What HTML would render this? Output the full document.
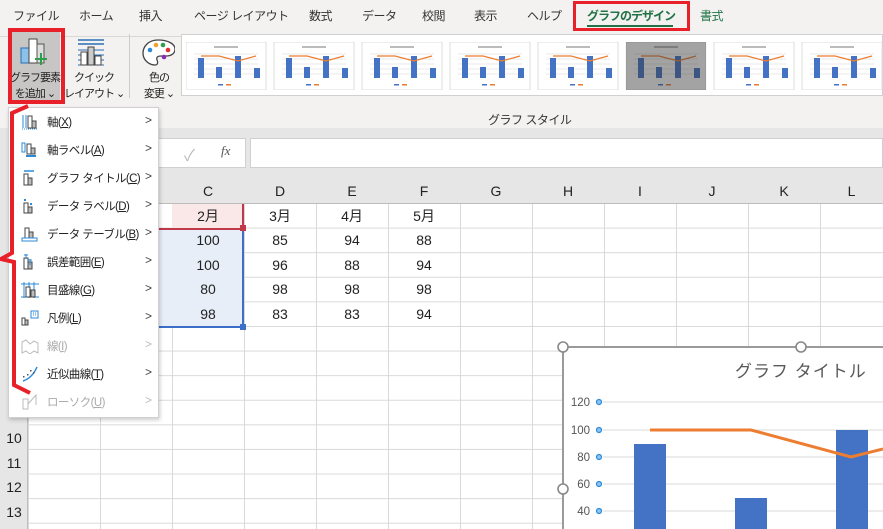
<!DOCTYPE html>
<html><head><meta charset="utf-8"><style>
*{margin:0;padding:0;box-sizing:border-box}
body{width:883px;height:529px;overflow:hidden;background:#fff;font-family:"Liberation Sans","Noto Sans CJK JP",sans-serif;position:relative;color:#222}
div,span{white-space:nowrap}
.a{position:absolute}
.tab{position:absolute;top:7px;font-size:12px;color:#333;letter-spacing:-0.5px}
.mi{position:absolute;left:0;width:150px;height:28px;font-size:11.5px;color:#222;letter-spacing:-0.6px}
.mi span.t{position:absolute;left:38px;top:6px}
.mi span.c{position:absolute;left:136px;top:5px;font-size:12px;color:#444}
.mi.dis{color:#aaa}.mi.dis span.c{color:#bbb}
.ic{position:absolute;left:12px;top:6px}
.ch{position:absolute;top:180px;height:23px;font-size:14px;text-align:center;line-height:23px;color:#222}
.cell{position:absolute;font-size:14px;text-align:center;width:72px}
.rh{position:absolute;left:0;width:28px;text-align:center;font-size:14px}
.bl{position:absolute;font-size:11px;line-height:16px;text-align:center;letter-spacing:-1px}
</style></head><body>
<div class="a" style="left:0;top:0;width:883px;height:130px;background:#f3f2f1"></div>
<div class="tab" style="left:13px">ファイル</div>
<div class="tab" style="left:79px">ホーム</div>
<div class="tab" style="left:139px">挿入</div>
<div class="tab" style="left:194px">ページ レイアウト</div>
<div class="tab" style="left:309px">数式</div>
<div class="tab" style="left:362px">データ</div>
<div class="tab" style="left:422px">校閲</div>
<div class="tab" style="left:474px">表示</div>
<div class="tab" style="left:527px">ヘルプ</div>
<div class="tab" style="left:587px;color:#217346;font-weight:bold;letter-spacing:-1px">グラフのデザイン</div>
<div class="a" style="left:587px;top:25px;width:86px;height:2px;background:#217346"></div>
<div class="tab" style="left:700px;color:#217346">書式</div>
<div class="a" style="left:573px;top:1px;width:117px;height:30px;border:3px solid #e8202a"></div>
<div class="a" style="left:0;top:36px;width:883px;height:1px;background:#d8d8d8"></div>
<div class="a" style="left:10px;top:32px;width:50px;height:70px;background:#c8c6c4"></div>
<svg class="a" style="left:18px;top:36px" width="34" height="30"><rect x="3" y="12" width="8" height="15" fill="#8cc1ea" stroke="#2b6fb5"/><rect x="11" y="3" width="8" height="24" fill="#fff" stroke="#444"/><rect x="19" y="8" width="7" height="19" fill="#ddd" stroke="#555"/><path d="M23 17v12M17 23h12" stroke="#2e9e48" stroke-width="2"/></svg>
<div class="bl" style="left:8px;top:70px;width:54px">グラフ要素<br>を追加 ⌄</div>
<div class="a" style="left:8px;top:28px;width:57px;height:76px;border:4px solid #e8202a"></div>
<svg class="a" style="left:76px;top:38px" width="32" height="30"><path d="M2 2h26M2 6h26" stroke="#2b6fb5" stroke-width="1.5"/><path d="M2 12h26M2 17h26M2 22h26M2 27h26" stroke="#2b6fb5"/><rect x="5" y="14" width="6" height="13" fill="#fff" stroke="#444"/><rect x="12" y="9" width="6" height="18" fill="#ccc" stroke="#444"/><rect x="19" y="18" width="6" height="9" fill="#fff" stroke="#444"/></svg>
<div class="bl" style="left:64px;top:70px;width:60px">クイック<br>レイアウト ⌄</div>
<div class="a" style="left:129px;top:34px;width:1px;height:64px;background:#ccc"></div>
<svg class="a" style="left:141px;top:38px" width="34" height="30"><path d="M17 2C7 2 2 9 2 15c0 8 7 12 12 12 3 0 3-3 2-5-1-3 1-4 4-4h5c6 0 9-3 9-7C34 6 27 2 17 2z" fill="#fff" stroke="#444" stroke-width="1.3"/><circle cx="9" cy="12" r="2.3" fill="#2b8ad8"/><circle cx="15" cy="7" r="2.3" fill="#f0a030"/><circle cx="22" cy="7" r="2.3" fill="#2e9e48"/><circle cx="27" cy="12" r="2.3" fill="#e03030"/><circle cx="23" cy="19" r="2.3" fill="#8a2bb5"/></svg>
<div class="bl" style="left:137px;top:70px;width:44px">色の<br>変更 ⌄</div>
<div class="a" style="left:181px;top:34px;width:702px;height:62px;background:#fff;border:1px solid #d0d0d0"></div>
<svg width="0" height="0" style="position:absolute"><defs>
<g id="th"><rect width="80" height="48" fill="#fff" stroke="#ddd"/><rect x="28" y="4" width="24" height="2" fill="#bbb"/><path d="M8 12h64M8 17h64M8 22h64M8 27h64M8 32h64" stroke="#e4e4e4" stroke-width=".7"/><rect x="12" y="16" width="6" height="20" fill="#4472c4"/><rect x="30" y="25" width="6" height="11" fill="#4472c4"/><rect x="49" y="14" width="6" height="22" fill="#4472c4"/><rect x="68" y="26" width="6" height="10" fill="#4472c4"/><path d="M15 14h18l19 5 18-5" stroke="#ed7d31" fill="none" stroke-width="1.2"/><rect x="32" y="42" width="5" height="1.5" fill="#4472c4"/><rect x="40" y="42" width="5" height="1.5" fill="#ed7d31"/></g>
</defs></svg>
<svg class="a" style="left:186px;top:42px" width="697" height="48">
<use href="#th" x="0"/><use href="#th" x="88"/><use href="#th" x="176"/><use href="#th" x="264"/><use href="#th" x="352"/>
<rect x="440" width="80" height="48" fill="#333"/><use href="#th" x="440" opacity=".55"/>
<use href="#th" x="528"/><use href="#th" x="616"/></svg>
<div class="a" style="left:488px;top:111px;font-size:12px;color:#333;letter-spacing:-0.5px">グラフ スタイル</div>
<div class="a" style="left:0;top:128px;width:883px;height:52px;background:#e6e6e6"></div>
<div class="a" style="left:158px;top:138px;width:88px;height:30px;background:#fff;border:1px solid #d0d0d0"></div>
<div class="a" style="left:184px;top:142px;font-size:16px;color:#bbb">✓</div>
<div class="a" style="left:221px;top:143px;font-size:13px;font-style:italic;font-family:'Liberation Serif',serif;color:#555">fx</div>
<div class="a" style="left:250px;top:138px;width:633px;height:30px;background:#fff;border:1px solid #d0d0d0"></div>
<div class="a" style="left:0;top:180px;width:883px;height:24px;background:#e6e6e6;border-bottom:1px solid #bdbdbd"></div>
<div class="a" style="left:0;top:180px;width:28px;height:349px;background:#e6e6e6;border-right:1px solid #bdbdbd"></div>
<div class="a" style="left:28px;top:204px;width:855px;height:325px;background-image:linear-gradient(90deg,#d9d9d9 1px,transparent 1px),linear-gradient(#d9d9d9 1px,transparent 1px);background-size:72px 100%,100% 24.6px;background-position:0 0,0 -1px"></div>
<div class="a" style="left:172px;top:204px;width:72px;height:24px;background:#fae8e8"></div>
<div class="a" style="left:28px;top:229px;width:216px;height:98px;background:#e8eef8"></div>
<div class="a" style="left:28px;top:228px;width:216px;height:2px;background:#c0394b"></div>
<div class="a" style="left:242px;top:204px;width:2px;height:25px;background:#c0394b"></div>
<div class="a" style="left:242px;top:229px;width:2px;height:98px;background:#3d6ec8"></div>
<div class="a" style="left:28px;top:326px;width:216px;height:2px;background:#3d6ec8"></div>
<div class="a" style="left:240px;top:225px;width:6px;height:6px;background:#c0394b"></div>
<div class="a" style="left:240px;top:324px;width:6px;height:6px;background:#3d6ec8"></div>
<div class="ch" style="left:172px;width:72px">C</div><div class="ch" style="left:244px;width:72px">D</div><div class="ch" style="left:316px;width:72px">E</div><div class="ch" style="left:388px;width:72px">F</div><div class="ch" style="left:460px;width:72px">G</div><div class="ch" style="left:532px;width:72px">H</div><div class="ch" style="left:604px;width:72px">I</div><div class="ch" style="left:676px;width:72px">J</div><div class="ch" style="left:748px;width:72px">K</div><div class="ch" style="left:820px;width:63px">L</div>
<div class="cell" style="left:172px;top:206px">2月</div><div class="cell" style="left:244px;top:206px">3月</div><div class="cell" style="left:316px;top:206px">4月</div><div class="cell" style="left:388px;top:206px">5月</div>
<div class="cell" style="left:172px;top:232px">100</div><div class="cell" style="left:244px;top:232px">85</div><div class="cell" style="left:316px;top:232px">94</div><div class="cell" style="left:388px;top:232px">88</div>
<div class="cell" style="left:172px;top:257px">100</div><div class="cell" style="left:244px;top:257px">96</div><div class="cell" style="left:316px;top:257px">88</div><div class="cell" style="left:388px;top:257px">94</div>
<div class="cell" style="left:172px;top:281px">80</div><div class="cell" style="left:244px;top:281px">98</div><div class="cell" style="left:316px;top:281px">98</div><div class="cell" style="left:388px;top:281px">98</div>
<div class="cell" style="left:172px;top:306px">98</div><div class="cell" style="left:244px;top:306px">83</div><div class="cell" style="left:316px;top:306px">83</div><div class="cell" style="left:388px;top:306px">94</div>
<div class="rh" style="top:430px">10</div><div class="rh" style="top:455px">11</div><div class="rh" style="top:479px">12</div><div class="rh" style="top:504px">13</div>
<div class="a" style="left:562px;top:346px;width:321px;height:183px;background:#fff;border-left:2px solid #9a9a9a;border-top:2px solid #9a9a9a"></div>
<svg class="a" style="left:556px;top:340px" width="327" height="189">
<circle cx="7" cy="7" r="5" fill="#fff" stroke="#888" stroke-width="1.6"/><circle cx="245" cy="7" r="5" fill="#fff" stroke="#888" stroke-width="1.6"/><circle cx="7" cy="149" r="5" fill="#fff" stroke="#888" stroke-width="1.6"/>
<path d="M47 62h280M47 90h280M47 117h280M47 144h280M47 171h280" stroke="#d9d9d9"/>
<g fill="#8ec5f5" stroke="#2b8ad8" stroke-width="1.2"><circle cx="43" cy="62" r="2.5"/><circle cx="43" cy="90" r="2.5"/><circle cx="43" cy="117" r="2.5"/><circle cx="43" cy="144" r="2.5"/><circle cx="43" cy="171" r="2.5"/></g>
<rect x="78" y="104" width="32" height="85" fill="#4472c4"/><rect x="179" y="158" width="32" height="31" fill="#4472c4"/><rect x="280" y="90" width="32" height="99" fill="#4472c4"/>
<path d="M94 90H195L295 117L327 109" stroke="#ed7d31" stroke-width="3" fill="none"/>
<g font-size="11.5" fill="#555" text-anchor="end" font-family="Liberation Sans,sans-serif"><text x="34" y="66">120</text><text x="34" y="94">100</text><text x="34" y="121">80</text><text x="34" y="148">60</text><text x="34" y="175">40</text></g>
</svg>
<div class="a" style="left:735px;top:357px;font-size:17px;color:#595959;letter-spacing:1px">グラフ タイトル</div>
<div class="a" style="left:8px;top:107px;width:151px;height:311px;background:#fff;border:1px solid #d0d0d0;box-shadow:1px 2px 4px rgba(0,0,0,.2)">
<div class="mi" style="top:0"><svg class="ic" width="18" height="16"><path d="M2 1v13M5 1v13" stroke="#2b8ad8"/><path d="M1 15h16" stroke="#2b8ad8" stroke-dasharray="1 1"/><rect x="7" y="2" width="4" height="12" fill="#fff" stroke="#444"/><rect x="11" y="7" width="4" height="7" fill="#bbb" stroke="#444"/></svg><span class="t">軸(<u>X</u>)</span><span class="c">&gt;</span></div>
<div class="mi" style="top:28px"><svg class="ic" width="18" height="16"><rect x="1" y="1" width="3" height="9" fill="#fff" stroke="#2b8ad8"/><rect x="6" y="2" width="4" height="10" fill="#fff" stroke="#444"/><rect x="10" y="6" width="4" height="6" fill="#bbb" stroke="#444"/><path d="M5 14h10" stroke="#2b8ad8" stroke-width="2"/></svg><span class="t">軸ラベル(<u>A</u>)</span><span class="c">&gt;</span></div>
<div class="mi" style="top:56px"><svg class="ic" width="18" height="16"><path d="M3 1h10" stroke="#2b8ad8" stroke-width="1.5"/><rect x="3" y="4" width="4" height="11" fill="#fff" stroke="#444"/><rect x="7" y="8" width="4" height="7" fill="#bbb" stroke="#444"/></svg><span class="t">グラフ タイトル(<u>C</u>)</span><span class="c">&gt;</span></div>
<div class="mi" style="top:84px"><svg class="ic" width="18" height="16"><rect x="3" y="1" width="2" height="2" fill="#2b8ad8"/><rect x="9" y="5" width="2" height="2" fill="#2b8ad8"/><rect x="3" y="5" width="4" height="10" fill="#fff" stroke="#444"/><rect x="7" y="9" width="4" height="6" fill="#bbb" stroke="#444"/></svg><span class="t">データ ラベル(<u>D</u>)</span><span class="c">&gt;</span></div>
<div class="mi" style="top:112px"><svg class="ic" width="18" height="16"><rect x="4" y="2" width="4" height="10" fill="#fff" stroke="#444"/><rect x="8" y="6" width="4" height="6" fill="#bbb" stroke="#444"/><rect x="1" y="12" width="15" height="3" fill="#fff" stroke="#2b8ad8"/></svg><span class="t">データ テーブル(<u>B</u>)</span><span class="c">&gt;</span></div>
<div class="mi" style="top:140px"><svg class="ic" width="18" height="16"><rect x="3" y="4" width="4" height="11" fill="#fff" stroke="#444"/><rect x="7" y="8" width="4" height="7" fill="#bbb" stroke="#444"/><path d="M5 0v5M3 1h4M9 5v6M7 6h4" stroke="#2b8ad8"/></svg><span class="t">誤差範囲(<u>E</u>)</span><span class="c">&gt;</span></div>
<div class="mi" style="top:168px"><svg class="ic" width="18" height="16"><path d="M0 2h18M0 15h18M3 0v16M8 0v16M13 0v16" stroke="#2b8ad8"/><rect x="5" y="5" width="4" height="10" fill="#fff" stroke="#444"/><rect x="10" y="8" width="4" height="7" fill="#bbb" stroke="#444"/></svg><span class="t">目盛線(<u>G</u>)</span><span class="c">&gt;</span></div>
<div class="mi" style="top:196px"><svg class="ic" width="18" height="16"><rect x="1" y="8" width="3" height="7" fill="#fff" stroke="#444"/><rect x="4" y="10" width="3" height="5" fill="#bbb" stroke="#444"/><rect x="10" y="1" width="7" height="7" fill="#fff" stroke="#2b8ad8"/><path d="M12 3h1M14 3h1M12 5h1M14 5h1" stroke="#2b8ad8"/></svg><span class="t">凡例(<u>L</u>)</span><span class="c">&gt;</span></div>
<div class="mi dis" style="top:224px"><svg class="ic" width="18" height="16"><path d="M1 4l4 -2 4 4 4-3 4 2v10l-4-2-4 3-4-3-4 2z" fill="none" stroke="#bbb"/></svg><span class="t">線(<u>I</u>)</span><span class="c">&gt;</span></div>
<div class="mi" style="top:252px"><svg class="ic" width="18" height="16"><path d="M2 15C8 13 13 8 16 1" stroke="#2b8ad8" stroke-width="1.5" fill="none"/><g fill="#555"><rect x="2" y="10" width="1.5" height="1.5"/><rect x="6" y="8" width="1.5" height="1.5"/><rect x="9" y="4" width="1.5" height="1.5"/><rect x="12" y="6" width="1.5" height="1.5"/></g></svg><span class="t">近似曲線(<u>T</u>)</span><span class="c">&gt;</span></div>
<div class="mi dis" style="top:280px"><svg class="ic" width="18" height="16"><rect x="2" y="5" width="5" height="10" fill="none" stroke="#bbb"/><path d="M7 10l8-9v10" stroke="#bbb" fill="none"/></svg><span class="t">ローソク(<u>U</u>)</span><span class="c">&gt;</span></div>
</div>
<svg class="a" style="left:0;top:100px" width="40" height="300"><path d="M28 6L12 13V153L1 159L14 162V285L30 293" stroke="#e8202a" stroke-width="4" fill="none"/></svg>
</body></html>
